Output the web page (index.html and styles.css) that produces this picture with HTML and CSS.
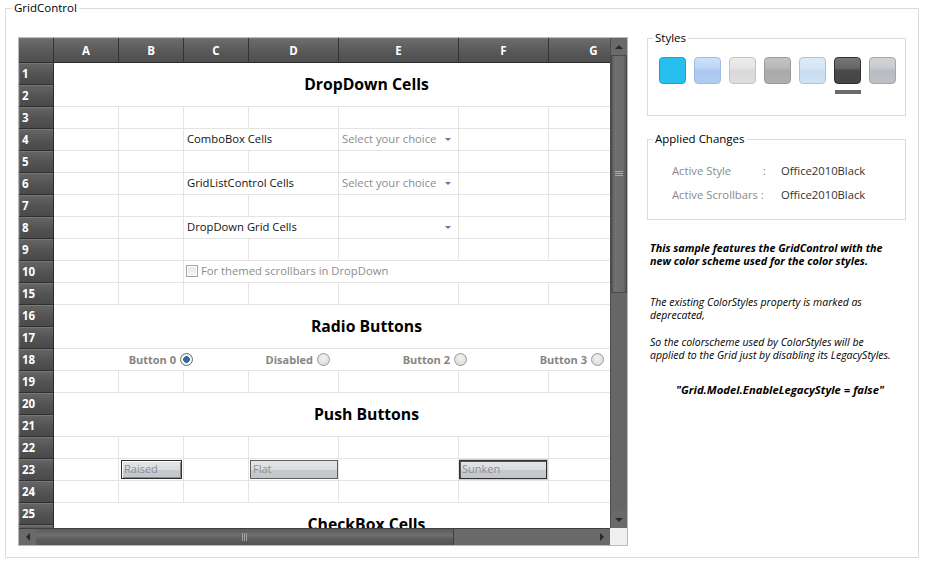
FILE: index.html
```html
<!DOCTYPE html>
<html>
<head>
<meta charset="utf-8">
<link rel="stylesheet" href="styles.css">
</head>
<body>
<div class="page">
<fieldset class="main">
  <legend>GridControl</legend>
  <div class="layout">
    <div class="grid">
      <div class="grid-top">
        <div class="viewport">
          <div class="sheet">
            <div class="corner"></div>
            <div class="ch">A</div><div class="ch">B</div><div class="ch">C</div><div class="ch">D</div><div class="ch">E</div><div class="ch">F</div><div class="ch">G</div>

            <div class="rh">1</div>
            <div class="c all r2 heading">DropDown Cells</div>
            <div class="rh">2</div>

            <div class="rh">3</div><div class="c"></div><div class="c"></div><div class="c"></div><div class="c"></div><div class="c"></div><div class="c"></div><div class="c"></div>

            <div class="rh">4</div><div class="c"></div><div class="c"></div><div class="c cd txt">ComboBox Cells</div><div class="c dd"><span class="ph">Select your choice</span><i class="arrow"></i></div><div class="c"></div><div class="c"></div>

            <div class="rh">5</div><div class="c"></div><div class="c"></div><div class="c"></div><div class="c"></div><div class="c"></div><div class="c"></div><div class="c"></div>

            <div class="rh">6</div><div class="c"></div><div class="c"></div><div class="c cd txt">GridListControl Cells</div><div class="c dd"><span class="ph">Select your choice</span><i class="arrow"></i></div><div class="c"></div><div class="c"></div>

            <div class="rh">7</div><div class="c"></div><div class="c"></div><div class="c"></div><div class="c"></div><div class="c"></div><div class="c"></div><div class="c"></div>

            <div class="rh">8</div><div class="c"></div><div class="c"></div><div class="c cd txt">DropDown Grid Cells</div><div class="c dd"><span class="ph"></span><i class="arrow"></i></div><div class="c"></div><div class="c"></div>

            <div class="rh">9</div><div class="c"></div><div class="c"></div><div class="c"></div><div class="c"></div><div class="c"></div><div class="c"></div><div class="c"></div>

            <div class="rh">10</div><div class="c"></div><div class="c"></div><div class="c cg chk"><span class="cbox"></span><span class="ph">For themed scrollbars in DropDown</span></div>

            <div class="rh">15</div><div class="c"></div><div class="c"></div><div class="c"></div><div class="c"></div><div class="c"></div><div class="c"></div><div class="c"></div>

            <div class="rh">16</div>
            <div class="c all r2 heading">Radio Buttons</div>
            <div class="rh">17</div>

            <div class="rh">18</div>
            <div class="c all radios">
              <div class="ritem"><span class="rl">Button 0</span><span class="radio on"></span></div>
              <div class="ritem"><span class="rl">Disabled</span><span class="radio"></span></div>
              <div class="ritem"><span class="rl">Button 2</span><span class="radio"></span></div>
              <div class="ritem"><span class="rl">Button 3</span><span class="radio"></span></div>
            </div>

            <div class="rh">19</div><div class="c"></div><div class="c"></div><div class="c"></div><div class="c"></div><div class="c"></div><div class="c"></div><div class="c"></div>

            <div class="rh">20</div>
            <div class="c all r2 heading">Push Buttons</div>
            <div class="rh">21</div>

            <div class="rh">22</div><div class="c"></div><div class="c"></div><div class="c"></div><div class="c"></div><div class="c"></div><div class="c"></div><div class="c"></div>

            <div class="rh">23</div><div class="c"></div><div class="c"><span class="pb raised">Raised</span></div><div class="c"></div><div class="c"><span class="pb flat">Flat</span></div><div class="c"></div><div class="c"><span class="pb sunken">Sunken</span></div><div class="c"></div>

            <div class="rh">24</div><div class="c"></div><div class="c"></div><div class="c"></div><div class="c"></div><div class="c"></div><div class="c"></div><div class="c"></div>

            <div class="rh">25</div>
            <div class="c all r2 heading">CheckBox Cells</div>
            <div class="rh">26</div>
          </div>
        </div>
        <div class="vscroll">
          <div class="sbtn"><i class="tri up"></i></div>
          <div class="vthumb"><span class="grip-v"></span></div>
          <div class="vtrack"></div>
          <div class="sbtn"><i class="tri down"></i></div>
        </div>
      </div>
      <div class="grid-bottom">
        <div class="hscroll">
          <div class="sbtn"><i class="tri left"></i></div>
          <div class="hthumb"><span class="grip-h"></span></div>
          <div class="htrack"></div>
          <div class="sbtn"><i class="tri right"></i></div>
        </div>
        <div class="sbcorner"></div>
      </div>
    </div>

    <div class="side">
      <fieldset class="box styles">
        <legend>Styles</legend>
        <div class="swatches">
          <div class="sw"><span class="tile t1"></span><span class="mark"></span></div>
          <div class="sw"><span class="tile t2"></span><span class="mark"></span></div>
          <div class="sw"><span class="tile t3"></span><span class="mark"></span></div>
          <div class="sw"><span class="tile t4"></span><span class="mark"></span></div>
          <div class="sw"><span class="tile t5"></span><span class="mark"></span></div>
          <div class="sw sel"><span class="tile t6"></span><span class="mark"></span></div>
          <div class="sw"><span class="tile t7"></span><span class="mark"></span></div>
        </div>
      </fieldset>
      <fieldset class="box applied">
        <legend>Applied Changes</legend>
        <div class="kv"><span class="k">Active Style</span><span class="colon">:</span><span class="v">Office2010Black</span></div>
        <div class="kv"><span class="k">Active Scrollbars :</span><span class="colon"></span><span class="v">Office2010Black</span></div>
      </fieldset>
      <p class="note strong">This sample features the GridControl with the new color scheme used for the color styles.</p>
      <p class="note p2">The existing ColorStyles property is marked as deprecated,</p>
      <p class="note p3">So the colorscheme used by ColorStyles will be applied to the Grid just by disabling its LegacyStyles.</p>
      <p class="note quote">"Grid.Model.EnableLegacyStyle = false"</p>
    </div>
  </div>
</fieldset>
</div>
</body>
</html>
```
FILE: styles.css
```css
* { box-sizing: border-box; }
html, body { margin: 0; padding: 0; background: #fff; }
body {
  width: 925px; height: 564px; overflow: hidden;
  font-family: "Open Sans", "Noto Sans", sans-serif;
  font-size: 11.25px; color: #000;
}
.page { padding: 1px 0 0 5px; }

fieldset { margin: 0; min-width: 0; display: block; }
legend { padding: 0 2px; line-height: 14px; font-size: 11.5px; color: #000; }

.main {
  width: 914px; height: 557px;
  border: 1px solid #dcdcdc;
  padding: 0 0 0 12px;
}
.main > legend { margin-left: -6px; }

.layout { display: flex; align-items: flex-start; margin-top: 22px; gap: 19px; }

/* ---------- grid ---------- */
.grid { width: 610px; height: 509px; border: 1px solid #b9b9b9; display: flex; flex-direction: column; flex: none; }
.grid-top { display: flex; height: 490px; }
.viewport { width: 591px; height: 490px; overflow: hidden; flex: none; }
.sheet {
  display: grid;
  grid-template-columns: 35px 65px 65px 65px 90px 120px 90px 90px;
  grid-template-rows: 25px;
  grid-auto-rows: 22px;
  width: 620px;
}
.corner, .ch {
  background: linear-gradient(#6e6e6e, #575757 60%, #4f4f4f);
  border-right: 1px solid #333;
  border-bottom: 1px solid #2c2c2c;
  box-shadow: inset 0 1px 0 #7a7a7a;
}
.ch {
  color: #fff; font-weight: 700; font-size: 11.5px;
  display: flex; align-items: center; justify-content: center;
}
.rh {
  grid-column: 1;
  background: linear-gradient(#666, #525252 55%, #4a4a4a);
  border-right: 1px solid #2c2c2c;
  border-bottom: 1px solid #2f2f2f;
  box-shadow: inset 0 1px 0 #777, inset 1px 0 0 #6c6c6c;
  color: #fff; font-weight: 700; font-size: 11.5px;
  display: flex; align-items: center; padding-left: 3px; padding-bottom: 1px;
}
.c {
  border-right: 1px solid #e4e4e4;
  border-bottom: 1px solid #e4e4e4;
  background: #fff;
  display: flex; align-items: center;
  white-space: nowrap; overflow: hidden;
  padding-bottom: 2px;
}
.all { grid-column: 2 / -1; }
.r2 { grid-row: span 2; }
.cd { grid-column: span 2; }
.cg { grid-column: 4 / -1; }

.heading { justify-content: center; padding-left: 41px; padding-bottom: 1px; font-weight: 700; font-size: 15.75px; color: #000; }
.txt { padding-left: 3px; color: #111; }
.dd { padding-left: 3px; }
.ph { color: #8c8c8c; }
.arrow {
  margin-left: auto; margin-right: 7px;
  width: 0; height: 0;
  border-left: 3px solid transparent; border-right: 3px solid transparent;
  border-top: 3px solid #5a78a0;
  margin-top: 1px;
}
.chk { padding-left: 2px; gap: 3px; }
.cbox {
  width: 12px; height: 12px; flex: none;
  border: 1px solid #a3a3a3;
  background: linear-gradient(#e6e6e6, #f7f7f7);
  box-shadow: inset 0 0 0 1px #fff;
  margin-bottom: -1px;
}

.radios { padding-left: 2px; padding-bottom: 0; }
.ritem { width: 137px; flex: none; display: flex; justify-content: flex-end; align-items: center; gap: 4px; }
.rl { color: #858585; font-weight: 700; font-size: 11px; padding-bottom: 1px; }
.radio {
  width: 13px; height: 13px; border-radius: 50%;
  border: 1px solid #9a9a9a;
  background: radial-gradient(circle at 50% 40%, #f2f2f2, #d6d6d6);
}
.radio.on {
  border-color: #6b6b6b;
  background: radial-gradient(circle, #2c6fae 0 2.5px, #1d5588 3px, #fff 3.6px, #f0f0f0 5px);
}

.pb {
  display: flex; align-items: center;
  align-self: flex-start;
  height: 19px; margin-top: 1px;
  border: 1px solid #2f2f2f;
  background: linear-gradient(#e3e5e8 0, #dadde0 50%, #c6c9ce 51%, #c3c6cb 100%);
  color: #8e8e8e; font-size: 11px; padding: 0 0 3px 2px;
}
.raised { width: 61px; margin-left: 2px; box-shadow: inset 1px 1px 0 #fff, inset -1px -1px 0 #8a8a8a; }
.flat { width: 88px; margin-left: 1px; border-color: #5c5c5c; }
.sunken { width: 88px; margin-left: 0; box-shadow: inset 1px 1px 0 #555; outline: 1px solid #cfcfcf; }

/* ---------- scrollbars ---------- */
.vscroll { width: 17px; height: 490px; background: #666; display: flex; flex-direction: column; border-left: 1px solid #4d4d4d; flex: none; }
.sbtn { width: 17px; height: 17px; flex: none; display: flex; align-items: center; justify-content: center; background: #6a6a6a; }
.vscroll .sbtn { width: 16px; }
.vthumb {
  height: 238px; flex: none;
  background: linear-gradient(90deg, #5a5a5a, #707070 20%, #6c6c6c 80%, #555);
  border: 1px solid #4a4a4a;
  display: flex; align-items: center; justify-content: center;
}
.vtrack { flex: 1; background: #666; }
.grip-v { width: 8px; height: 6px; background: repeating-linear-gradient(#a9a9a9 0 1px, transparent 1px 2px); }
.tri { width: 0; height: 0; display: block; }
.tri.up { border-left: 4px solid transparent; border-right: 4px solid transparent; border-bottom: 4px solid #2a2a2a; }
.tri.down { border-left: 4px solid transparent; border-right: 4px solid transparent; border-top: 4px solid #2a2a2a; }
.tri.left { border-top: 4px solid transparent; border-bottom: 4px solid transparent; border-right: 4px solid #2a2a2a; }
.tri.right { border-top: 4px solid transparent; border-bottom: 4px solid transparent; border-left: 4px solid #2a2a2a; }

.grid-bottom { display: flex; height: 17px; }
.hscroll { width: 591px; display: flex; background: #666; border-top: 1px solid #3f3f3f; flex: none; }
.hscroll .sbtn { height: 16px; }
.hthumb {
  width: 418px; flex: none;
  background: linear-gradient(#5c5c5c, #6e6e6e 40%, #5e5e5e 60%, #555);
  border-right: 1px solid #3f3f3f;
  display: flex; align-items: center; justify-content: center;
}
.grip-h { width: 6px; height: 8px; background: repeating-linear-gradient(90deg, #a0a0a0 0 1px, transparent 1px 2px); }
.htrack { flex: 1; background: #6a6a6a; }
.sbcorner { width: 17px; background: #f0f0f0; }

/* ---------- side ---------- */
.side { width: 259px; margin-top: -6px; flex: none; }
.box { width: 259px; border: 1px solid #dcdcdc; padding: 0 0 0 11px; }
.box > legend { margin-left: -6px; }
.styles { height: 85px; }
.swatches { display: flex; gap: 8px; margin-top: 12px; }
.sw { display: flex; flex-direction: column; align-items: center; gap: 6px; }
.tile { width: 27px; height: 27px; border-radius: 4px; border: 1px solid #999; }
.mark { width: 26px; height: 4px; }
.sel .mark { background: #6b6b6b; }
.t1 { background: #26bff0; border-color: #1aa3d6; }
.t2 { background: linear-gradient(#cfe0f9, #bcd4f6 40%, #aac8f1 50%, #b0ccf2); border-color: #9fbde3; }
.t3 { background: linear-gradient(#ececec, #e4e4e4 40%, #d9d9d9 50%, #dedede); border-color: #c4c4c4; }
.t4 { background: linear-gradient(#c2c2c2, #b8b8b8 40%, #a9a9a9 50%, #b0b0b0); border-color: #9a9a9a; }
.t5 { background: linear-gradient(#dfeaf6, #d6e6f5 40%, #c9ddf0 50%, #d0e2f3); border-color: #a9c5dc; }
.t6 { background: linear-gradient(#777, #666 40%, #4a4a4a 50%, #444); border-color: #2f2f2f; }
.t7 { background: linear-gradient(#d1d3d6, #c9cbce 40%, #b9bcc0 50%, #bec1c5); border-color: #a3a6aa; }

.applied { height: 88px; margin-top: 16px; padding-left: 24px; padding-top: 12px; }
.applied > legend { margin-left: -19px; }
.kv { display: flex; height: 24px; align-items: center; font-size: 11.25px; white-space: nowrap; }
.k { width: 91px; flex: none; color: #8a8a8a; }
.colon { width: 18px; flex: none; color: #8a8a8a; }
.v { color: #333; }

.note { margin: 0; padding-left: 3px; font-style: italic; font-size: 10.5px; line-height: 13px; color: #000; }
.strong { font-weight: 700; font-size: 10.75px; margin-top: 22px; width: 250px; }
.p2 { margin-top: 28px; width: 230px; }
.p3 { margin-top: 14px; width: 253px; }
.quote { font-weight: 700; font-size: 11.25px; margin-top: 21px; padding-left: 29px; }
```
